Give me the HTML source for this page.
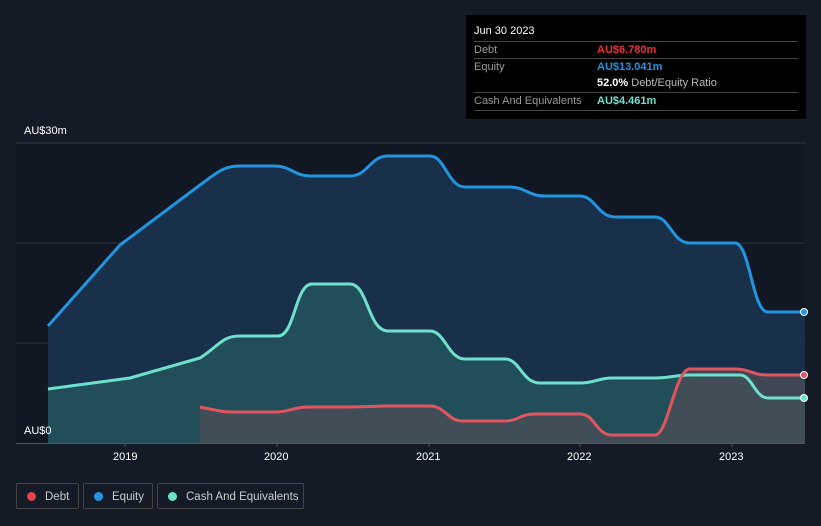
<!DOCTYPE html><html><head><style>
body{margin:0;width:821px;height:526px;background:#151b26;font-family:"Liberation Sans",sans-serif;overflow:hidden;position:relative}
.tt{position:absolute;left:466px;top:15px;width:340px;height:104px;background:#000;color:#fff;font-size:11px}
.row{position:absolute;left:8px;width:324px;border-top:1px solid #444;height:17px;line-height:17px}
.l{color:#999;position:absolute;left:0}.v{position:absolute;left:123px;font-weight:bold}
.leg{position:absolute;top:483px;height:26px;border:1px solid #444;border-radius:2px;color:#ccc;font-size:11.5px;line-height:26px;box-sizing:border-box;white-space:nowrap;overflow:hidden}
.leg i{display:inline-block;width:9px;height:9px;border-radius:50%;margin:0 9px 0 10px;vertical-align:-1px}
.ax{position:absolute;color:#fff;font-size:11px}
</style></head><body>
<svg width="821" height="526" style="position:absolute;left:0;top:0">
<rect x="16" y="143" width="789" height="300" fill="#121823"/>
<line x1="16" y1="143" x2="805" y2="143" stroke="#333a45"/>
<line x1="16" y1="243" x2="805" y2="243" stroke="#2a313c"/>
<line x1="16" y1="343" x2="805" y2="343" stroke="#2a313c"/>
<path d="M48,326 L120,245 L200,185 C220,170 225,166 240,166 L275,166 C290,166 295,176 310,176 L350,176 C368,176 370,156 388,156 L430,156 C445,156 448,187 465,187 L510,187 C525,187 528,196 545,196 L580,196 C595,196 598,217 615,217 L655,217 C670,217 672,243 690,243 L735,243 C750,243 752,312 768,312 L805,312 L805,443 L48,443Z" fill="#1a3550" fill-opacity="0.85"/>
<path d="M48,389 L130,378 L200,358 C220,345 222,336 240,336 L278,336 C295,336 295,284 312,284 L350,284 C368,284 368,331 388,331 L430,331 C445,331 448,359 465,359 L505,359 C520,359 522,383 540,383 L580,383 C595,383 598,378 612,378 L655,378 C670,378 675,375 690,375 L740,375 C752,375 755,398 768,398 L805,398 L805,443 L48,443Z" fill="#23535a" fill-opacity="0.85"/>
<path d="M200,407 C220,411 222,412 235,412 L275,412 C290,412 292,407 310,407 L350,407 L385,406 L430,406 C445,406 448,421 462,421 L505,421 C518,421 520,414 535,414 L580,414 C595,414 596,435 612,435 L655,435 C668,435 675,369 690,369 L735,369 C750,369 752,375 768,375 L805,375 L805,443 L200,443Z" fill="#4a4e58" fill-opacity="0.8"/>
<path d="M48,326 L120,245 L200,185 C220,170 225,166 240,166 L275,166 C290,166 295,176 310,176 L350,176 C368,176 370,156 388,156 L430,156 C445,156 448,187 465,187 L510,187 C525,187 528,196 545,196 L580,196 C595,196 598,217 615,217 L655,217 C670,217 672,243 690,243 L735,243 C750,243 752,312 768,312 L805,312" fill="none" stroke="#2394df" stroke-width="3"/>
<path d="M48,389 L130,378 L200,358 C220,345 222,336 240,336 L278,336 C295,336 295,284 312,284 L350,284 C368,284 368,331 388,331 L430,331 C445,331 448,359 465,359 L505,359 C520,359 522,383 540,383 L580,383 C595,383 598,378 612,378 L655,378 C670,378 675,375 690,375 L740,375 C752,375 755,398 768,398 L805,398" fill="none" stroke="#6ee0cc" stroke-width="3"/>
<path d="M200,407 C220,411 222,412 235,412 L275,412 C290,412 292,407 310,407 L350,407 L385,406 L430,406 C445,406 448,421 462,421 L505,421 C518,421 520,414 535,414 L580,414 C595,414 596,435 612,435 L655,435 C668,435 675,369 690,369 L735,369 C750,369 752,375 768,375 L805,375" fill="none" stroke="#e05560" stroke-width="3"/>
<circle cx="804" cy="312" r="3.5" fill="#2394df" stroke="#fff"/>
<circle cx="804" cy="375" r="3.5" fill="#e05560" stroke="#fff"/>
<circle cx="804" cy="398" r="3.5" fill="#6ee0cc" stroke="#fff"/>
<line x1="16" y1="443.5" x2="805" y2="443.5" stroke="#555"/>
<g stroke="#555"><line x1="125" y1="443" x2="125" y2="447"/><line x1="277" y1="443" x2="277" y2="447"/><line x1="429" y1="443" x2="429" y2="447"/><line x1="580" y1="443" x2="580" y2="447"/><line x1="732" y1="443" x2="732" y2="447"/></g>
</svg>
<div class="ax" style="left:24px;top:125px">AU$30m</div>
<div class="ax" style="left:24px;top:425px">AU$0</div>
<div class="ax" style="left:113px;top:451px">2019</div>
<div class="ax" style="left:264px;top:451px">2020</div>
<div class="ax" style="left:416px;top:451px">2021</div>
<div class="ax" style="left:567px;top:451px">2022</div>
<div class="ax" style="left:719px;top:451px">2023</div>
<div class="tt">
<div style="position:absolute;left:8px;top:10px;font-size:11px">Jun 30 2023</div>
<div class="row" style="top:26px"><span class="l">Debt</span><span class="v" style="color:#e5343e">AU$6.780m</span></div>
<div class="row" style="top:43px"><span class="l">Equity</span><span class="v" style="color:#2394df">AU$13.041m</span></div>
<div class="row" style="top:60px;border-top:none"><span class="v" style="color:#fff">52.0% <span style="color:#bbb;font-weight:normal">Debt/Equity Ratio</span></span></div>
<div class="row" style="top:77px;border-bottom:1px solid #444"><span class="l">Cash And Equivalents</span><span class="v" style="color:#6ee0cc">AU$4.461m</span></div>
</div>
<div class="leg" style="left:16px;width:63px"><i style="background:#e5434b"></i>Debt</div>
<div class="leg" style="left:83px;width:70px"><i style="background:#2394df"></i>Equity</div>
<div class="leg" style="left:157px;width:147px"><i style="background:#6ee0cc"></i>Cash And Equivalents</div>
</body></html>
